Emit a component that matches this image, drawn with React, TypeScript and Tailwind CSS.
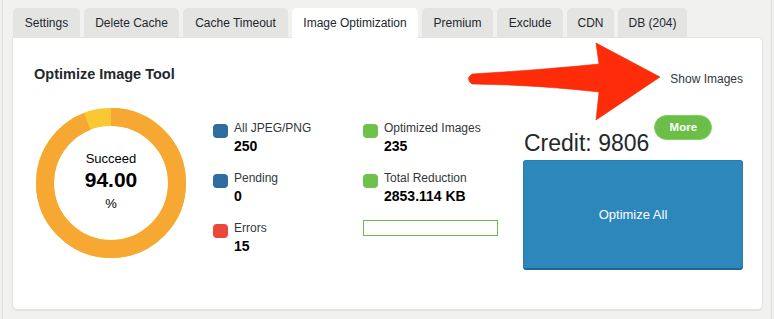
import React from 'react';

const tabs = [
  { label: 'Settings', w: 'w-[67px]' },
  { label: 'Delete Cache', w: 'w-[95px]' },
  { label: 'Cache Timeout', w: 'w-[105px]' },
  { label: 'Image Optimization', w: 'w-[126px]', active: true },
  { label: 'Premium', w: 'w-[71px]' },
  { label: 'Exclude', w: 'w-[66px]' },
  { label: 'CDN', w: 'w-[47px]' },
  { label: 'DB (204)', w: 'w-[69px]' },
];

// Donut showing the succeed percentage
function Donut({ percent }: { percent: number }) {
  const r = 66;
  const c = 2 * Math.PI * r;
  const done = (c * percent) / 100;
  return (
    <div className="relative w-[150px] h-[150px] shrink-0">
      <svg width="150" height="150" viewBox="0 0 150 150" className="absolute inset-0">
        <g transform="rotate(-90 75 75)">
          <circle cx="75" cy="75" r={r} fill="none" stroke="#f9c832" strokeWidth="18" />
          <circle
            cx="75"
            cy="75"
            r={r}
            fill="none"
            stroke="#f6a832"
            strokeWidth="18"
            strokeDasharray={`${done} ${c}`}
          />
        </g>
      </svg>
      <div className="absolute inset-0 flex flex-col items-center justify-center text-black">
        <div className="text-[13px] leading-[16px] mt-[-2px]">Succeed</div>
        <div className="text-[21px] leading-[26px] font-bold">94.00</div>
        <div className="text-[13px] leading-[18px] mt-[2px]">%</div>
      </div>
    </div>
  );
}

function LegendItem({ color, label, value }: { color: string; label: string; value: string }) {
  return (
    <div className="flex gap-[6px]">
      <div className={`w-[15px] h-[14px] rounded-[4px] mt-[3px] shrink-0 ${color}`} />
      <div>
        <div className="text-[12px] leading-[15px] text-[#32373c]">{label}</div>
        <div className="text-[14px] leading-[17px] font-bold text-black mt-[2px]">{value}</div>
      </div>
    </div>
  );
}

export default function App() {
  return (
    <div
      className="relative w-[774px] h-[319px] bg-[#f1f1ef] overflow-hidden"
      style={{ fontFamily: '"Liberation Sans", Arial, sans-serif' }}
    >
      <div className="ml-[2px] w-[770px] h-full border-l border-r border-[#dfdfdb] pl-[9px] pr-[8px] pt-[8px]">
        {/* Tabs */}
        <div className="flex gap-[4px] pl-[1px]">
          {tabs.map((t) => (
            <div
              key={t.label}
              className={`${t.w} h-[29px] flex items-center justify-center rounded-t-[5px] text-[12px] text-[#23282d] ${
                t.active ? 'bg-white h-[30px] relative z-10' : 'bg-[#e4e4e3]'
              }`}
            >
              {t.label}
            </div>
          ))}
        </div>

        {/* Panel */}
        <div className="mt-[-1px] w-[751px] h-[273px] bg-white border border-[#e3e3e0] rounded-b-[5px] rounded-tr-[5px] shadow-[0_1px_1px_rgba(0,0,0,0.06)] pl-[21px] pr-[19px] pt-[27px]">
          <div className="flex justify-between items-start">
            <h2 className="text-[14.5px] leading-[18px] font-bold text-[#23282d]">Optimize Image Tool</h2>
            <span className="text-[12px] leading-[15px] text-[#32373c] mt-[7px]">Show Images</span>
          </div>

          <div className="flex items-start mt-[21px]">
            <div className="ml-[2px]">
              <Donut percent={94} />
            </div>

            <div className="ml-[27px] w-[150px] mt-[13px] flex flex-col gap-[16px]">
              <LegendItem color="bg-[#2f6da1]" label="All JPEG/PNG" value="250" />
              <LegendItem color="bg-[#2f6da1]" label="Pending" value="0" />
              <LegendItem color="bg-[#e8493a]" label="Errors" value="15" />
            </div>

            <div className="w-[160px] mt-[13px] flex flex-col gap-[16px]">
              <LegendItem color="bg-[#6cc24a]" label="Optimized Images" value="235" />
              <LegendItem color="bg-[#6cc24a]" label="Total Reduction" value="2853.114 KB" />
              <div className="w-[135px] h-[16px] border border-[#72b852] mt-[-1px]" />
            </div>

            <div className="w-[220px] mt-[7px]">
              <div className="flex items-start gap-[5px]">
                <div className="text-[23px] leading-[28px] text-[#23282d] mt-[14px] ml-[1px]">Credit: 9806</div>
                <div className="w-[58px] h-[25px] rounded-full bg-[#6bbf48] border border-[#86cf64] flex items-center justify-center text-white text-[11.5px] font-bold">
                  More
                </div>
              </div>
              <button className="mt-[3px] w-[220px] h-[110px] bg-[#2e87ba] border border-[#2a7aab] border-b-[#1f6690] border-b-2 rounded-[3px] text-white text-[13px] flex items-center justify-center">
                Optimize All
              </button>
            </div>
          </div>
        </div>
      </div>

      {/* Red annotation arrow */}
      <svg
        className="absolute left-0 top-0 pointer-events-none"
        width="774"
        height="319"
        viewBox="0 0 774 319"
      >
        <path
          d="M 472 74 Q 540 70 599 64 L 596 43 L 660 77 L 596 120 L 599 92 Q 540 85 472 84 Q 465 79 472 74 Z"
          fill="#ff2c0a"
          stroke="#e8280a"
          strokeWidth="0.6"
          strokeLinejoin="round"
        />
      </svg>
    </div>
  );
}
